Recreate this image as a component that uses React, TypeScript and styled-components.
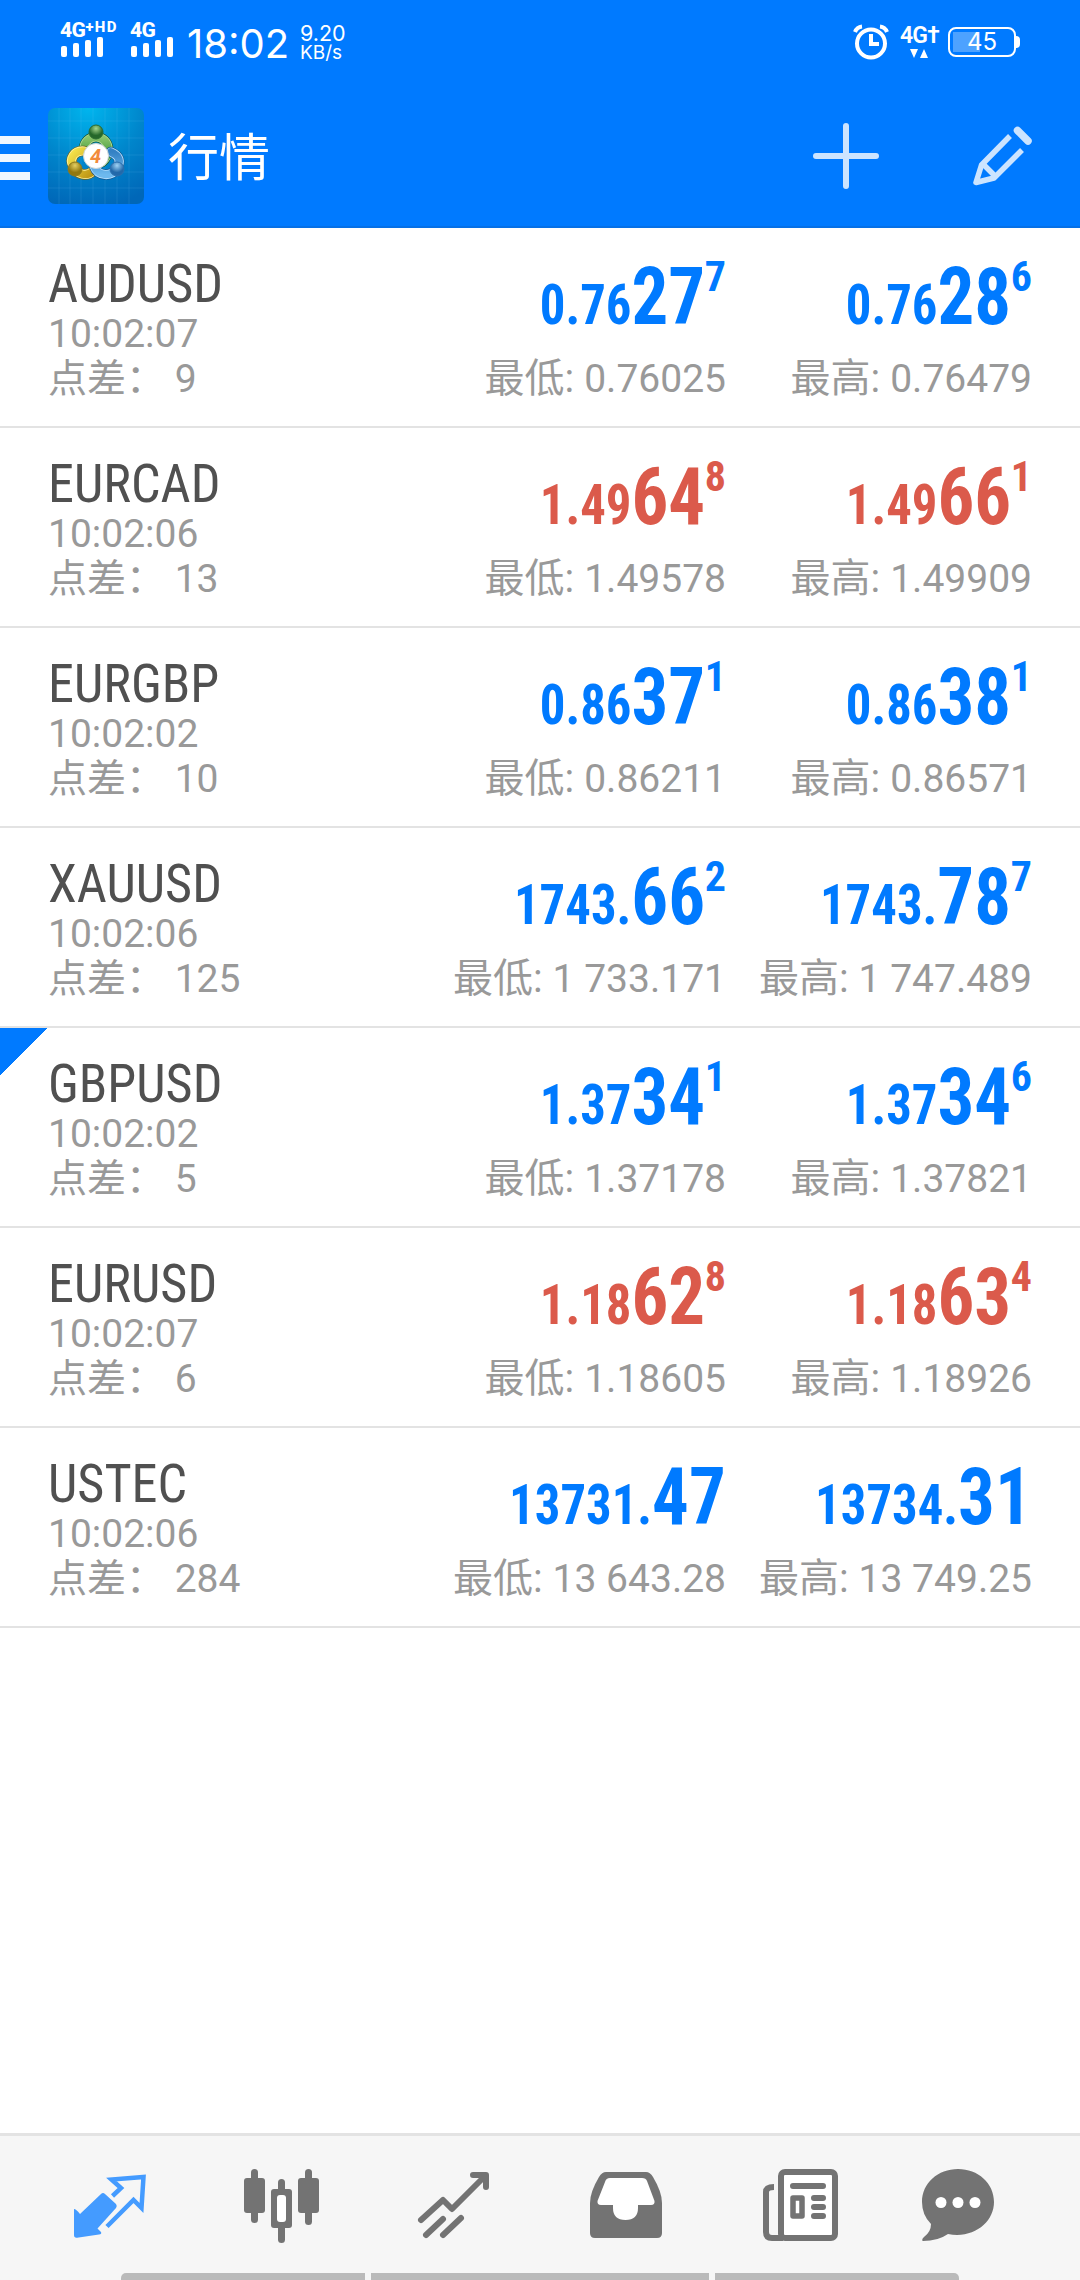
import React from 'react';
import styled, { createGlobalStyle } from 'styled-components';

const BLUE = '#007aff';
const RED = '#db5a4b';

const GlobalStyle = createGlobalStyle`
  *, *::before, *::after { box-sizing: border-box; }
  body { margin: 0; background: #fff; font-family: Roboto, "Noto Sans CJK SC", sans-serif; }
`;

const Screen = styled.main`
  width: 1080px;
  height: 2280px;
  display: flex;
  flex-direction: column;
  overflow: hidden;
  background: #fff;
`;

const TopArea = styled.header`
  height: 228px;
  flex: none;
  color: #fff;
  background: ${BLUE};
  border-bottom: 2px solid #0670e6;
`;

const StatusBar = styled.div`
  height: 84px;
  display: flex;
  align-items: flex-start;
  padding: 0 60px;
  font-family: Inter, sans-serif;
`;

const Signal = styled.div<{ $width: number }>`
  width: ${(p) => p.$width}px;
  padding-top: 21px;
  display: flex;
  flex-direction: column;
`;

const SignalLabel = styled.span`
  height: 16px;
  display: flex;
  font-family: Roboto, sans-serif;
  font-size: 21px;
  font-weight: 800;
  line-height: 18px;
  letter-spacing: -0.5px;
  white-space: nowrap;
`;

const SignalSuffix = styled.span`
  font-size: 15px;
  line-height: 12px;
  letter-spacing: 1.3px;
`;

const SignalBars = styled.div`
  height: 20px;
  display: flex;
  align-items: flex-end;
  gap: 6px;
  padding-left: 1px;
`;

const SignalBar = styled.i<{ $height: number }>`
  width: 6px;
  height: ${(p) => p.$height}px;
  border-radius: 2px;
  background: #fff;
`;

const Clock = styled.span`
  width: 113px;
  padding-top: 20px;
  font-size: 40px;
  line-height: 48px;
`;

const NetSpeed = styled.div`
  padding-top: 23px;
  font-size: 21.5px;
  line-height: 20px;
`;

const SpeedUnit = styled.div`
  font-size: 19px;
`;

const StatusRight = styled.div`
  margin-left: auto;
  padding-top: 24px;
  display: flex;
  align-items: flex-start;
`;

const DataType = styled.div`
  width: 48px;
  margin-left: 11px;
  display: flex;
  flex-direction: column;
  font: 600 23px/24px Roboto, sans-serif;
  letter-spacing: -0.8px;
`;

const DataArrows = styled.svg`
  margin: 1px 0 0 10px;
`;

const Battery = styled.div`
  width: 68px;
  height: 30px;
  margin-top: 3px;
  border: 2px solid #fff;
  border-radius: 8px;
  text-align: center;
  font-size: 24px;
  line-height: 26px;
  background: linear-gradient(#4da2ff, #4da2ff) 3px 3px / 27px 20px no-repeat;
`;

const BatteryCap = styled.i`
  width: 4px;
  height: 12px;
  margin-top: 12px;
  border-radius: 0 4px 4px 0;
  background: #fff;
`;

const AppBar = styled.div`
  height: 144px;
  display: flex;
  align-items: center;
`;

const MenuButton = styled.div`
  width: 48px;
  display: flex;
  flex-direction: column;
  gap: 10px;
  padding-top: 4px;
`;

const MenuLine = styled.i`
  width: 30px;
  height: 8px;
  background: #f0f7ff;
`;

const Title = styled.h1`
  margin: 0 0 5px 24px;
  flex: 1;
  font: 400 51px/60px "Noto Sans CJK SC", sans-serif;
`;

const AppActions = styled.div`
  display: flex;
  gap: 93px;
  padding-right: 48px;
`;

const QuoteList = styled.section`
  flex: 1;
`;

const QuoteRow = styled.article<{ $marked?: boolean }>`
  height: 200px;
  display: grid;
  grid-template-columns: 372px 306px 306px;
  padding: 0 48px;
  border-bottom: 2px solid #e3e3e3;
  background: ${(p) =>
    p.$marked ? `linear-gradient(135deg, ${BLUE} 50%, transparent 50%) 0 0 / 48px 48px no-repeat` : 'none'};
`;

const Instrument = styled.div`
  padding-top: 33px;
  color: #999;
  font-size: 39px;
  line-height: 45px;
  white-space: pre;
`;

const SymbolName = styled.h2`
  margin: 0 0 6px;
  color: #505050;
  font: 400 54px/45px "Roboto Condensed", Roboto, sans-serif;
  transform: scaleX(0.967);
  transform-origin: left;
`;

const PriceColumn = styled.div`
  padding-top: 29px;
  text-align: right;
  white-space: nowrap;
`;

const Price = styled.div<{ $down?: boolean }>`
  height: 80px;
  color: ${(p) => (p.$down ? RED : BLUE)};
  font: 700 79px/80px "Roboto Condensed", Roboto, sans-serif;
`;

const PriceBody = styled.span`
  display: inline-block;
  transform: scaleX(0.923);
  transform-origin: right;
`;

const PriceHead = styled.span`
  font-size: 55px;
  line-height: 0;
`;

const PriceTail = styled.span`
  font-size: 42px;
  line-height: 0;
  vertical-align: 33px;
`;

const Extreme = styled.div`
  margin-top: 20px;
  color: #999;
  font-size: 39px;
  line-height: 45px;
`;

const ExtremeLabel = styled.span`
  font-size: 40px;
  line-height: 0;
`;

const TabBar = styled.nav`
  height: 147px;
  flex: none;
  display: flex;
  flex-direction: column;
  border-top: 3px solid #e3e3e3;
  background: #f6f6f6;
`;

const Tabs = styled.div`
  height: 137px;
  display: grid;
  grid-template-columns: 171px 171px 175px 169px 178px 141px;
  padding: 0 25px;
`;

const Tab = styled.button`
  display: flex;
  justify-content: center;
  padding: 33px 0 0;
  border: 0;
  background: none;
`;

const GestureArea = styled.div`
  height: 7px;
  display: grid;
  grid-template-columns: 244px 338px 244px;
  gap: 6px;
  padding-left: 121px;
`;

const GestureBar = styled.i<{ $radius: string }>`
  background: #bababa;
  border-radius: ${(p) => p.$radius};
`;

type Quote = {
  name: string;
  time: string;
  spread: string;
  bid: [string, string, string];
  ask: [string, string, string];
  low: string;
  high: string;
  down?: boolean;
  marked?: boolean;
};

const quotes: Quote[] = [
  { name: 'AUDUSD', time: '10:02:07', spread: '9', bid: ['0.76', '27', '7'], ask: ['0.76', '28', '6'], low: '0.76025', high: '0.76479' },
  { name: 'EURCAD', time: '10:02:06', spread: '13', bid: ['1.49', '64', '8'], ask: ['1.49', '66', '1'], low: '1.49578', high: '1.49909', down: true },
  { name: 'EURGBP', time: '10:02:02', spread: '10', bid: ['0.86', '37', '1'], ask: ['0.86', '38', '1'], low: '0.86211', high: '0.86571' },
  { name: 'XAUUSD', time: '10:02:06', spread: '125', bid: ['1743.', '66', '2'], ask: ['1743.', '78', '7'], low: '1 733.171', high: '1 747.489' },
  { name: 'GBPUSD', time: '10:02:02', spread: '5', bid: ['1.37', '34', '1'], ask: ['1.37', '34', '6'], low: '1.37178', high: '1.37821', marked: true },
  { name: 'EURUSD', time: '10:02:07', spread: '6', bid: ['1.18', '62', '8'], ask: ['1.18', '63', '4'], low: '1.18605', high: '1.18926', down: true },
  { name: 'USTEC', time: '10:02:06', spread: '284', bid: ['13731.', '47', ''], ask: ['13734.', '31', ''], low: '13 643.28', high: '13 749.25' },
];

function PriceCell({ parts, down, label, value }: { parts: [string, string, string]; down?: boolean; label: string; value: string }) {
  const [head, main, tail] = parts;
  return (
    <PriceColumn>
      <Price $down={down}>
        <PriceBody><PriceHead>{head}</PriceHead>{main}</PriceBody>
        {tail && <PriceTail>{tail}</PriceTail>}
      </Price>
      <Extreme><ExtremeLabel>{label}: </ExtremeLabel>{value}</Extreme>
    </PriceColumn>
  );
}

function SignalMeter({ width, suffix }: { width: number; suffix?: string }) {
  return (
    <Signal $width={width}>
      <SignalLabel>4G{suffix && <SignalSuffix>{suffix}</SignalSuffix>}</SignalLabel>
      <SignalBars>
        {[11, 14, 17, 20].map((h) => <SignalBar key={h} $height={h} />)}
      </SignalBars>
    </Signal>
  );
}

function AlarmIcon() {
  return (
    <svg width="36" height="36" viewBox="0 0 36 36" fill="none" stroke="#fff">
      <circle cx="18" cy="19.5" r="14" strokeWidth="4" />
      <path d="M18 10v10h8" strokeWidth="4" />
      <path d="M2 8Q4 3 9 2.500M34 8Q32 3 27 2.500" strokeWidth="4" />
    </svg>
  );
}

function AppLogo() {
  return (
    <svg width="96" height="96" viewBox="0 0 96 96">
      <defs>
        <radialGradient id="sky" cx=".42" cy="0" r="1.05">
          <stop offset="0" stopColor="#00b5ee" />
          <stop offset=".55" stopColor="#0085cb" />
          <stop offset="1" stopColor="#0067b8" />
        </radialGradient>
        <linearGradient id="green" x2="0" y2="1"><stop stopColor="#8bc56b" /><stop offset="1" stopColor="#278a2c" /></linearGradient>
        <linearGradient id="gold" x2="1" y2="1"><stop stopColor="#f6e34b" /><stop offset="1" stopColor="#bd9413" /></linearGradient>
        <linearGradient id="azure" x2="0" y2="1"><stop stopColor="#3481c4" /><stop offset="1" stopColor="#6db9ee" /></linearGradient>
        <radialGradient id="greenBall" cy=".25"><stop stopColor="#a6d68c" /><stop offset="1" stopColor="#25682a" /></radialGradient>
        <radialGradient id="goldBall" cy=".25"><stop stopColor="#e5cf62" /><stop offset="1" stopColor="#91780e" /></radialGradient>
        <radialGradient id="azureBall" cy=".25"><stop stopColor="#a0d2f4" /><stop offset="1" stopColor="#2269aa" /></radialGradient>
      </defs>
      <rect width="96" height="96" rx="7" fill="url(#sky)" />
      <path d="M11 0v96M22 0v96M33 0v96M45 0v96M57 0v96M69 0v96M81 0v96M0 13h96M0 30h96M0 47h96M0 64h96M0 80h96" stroke="#79d4ff" strokeOpacity=".13" />
      <g fill="none" strokeLinecap="round">
        <path d="M36 41A12 12 0 1 1 60 41Q60 49 54 54" stroke="#17572c" strokeWidth="10.500" />
        <path d="M36 41A12 12 0 1 1 60 41Q60 49 54 54" stroke="#b5dd9f" strokeWidth="9.200" />
        <path d="M36 41A12 12 0 1 1 60 41Q60 49 54 54" stroke="url(#green)" strokeWidth="7.500" />
        <path d="M36 43C26 42 21 51 25 58C29 67 39 69 45 63" stroke="#6d651c" strokeWidth="10.500" />
        <path d="M36 43C26 42 21 51 25 58C29 67 39 69 45 63" stroke="#fff2a2" strokeWidth="9.200" />
        <path d="M36 43C26 42 21 51 25 58C29 67 39 69 45 63" stroke="url(#gold)" strokeWidth="7.500" />
        <path d="M63 44C72 48 73 54 69 60C64 69 50 69 46 58" stroke="#14568f" strokeWidth="10.500" />
        <path d="M63 44C72 48 73 54 69 60C64 69 50 69 46 58" stroke="#b6e1ff" strokeWidth="9.200" />
        <path d="M63 44C72 48 73 54 69 60C64 69 50 69 46 58" stroke="url(#azure)" strokeWidth="7.500" />
      </g>
      <circle cx="48" cy="24" r="7" fill="url(#greenBall)" stroke="#2c6d32" />
      <circle cx="27" cy="61" r="7" fill="url(#goldBall)" stroke="#8d7a1e" />
      <circle cx="69" cy="61" r="7" fill="url(#azureBall)" stroke="#2c6fae" />
      <circle cx="48" cy="48" r="12.500" fill="#fff" stroke="#ccd5d5" />
      <text x="47.500" y="55" textAnchor="middle" fontFamily="Roboto, sans-serif" fontStyle="italic" fontWeight="700" fontSize="20" fill="#f28b3b">4</text>
    </svg>
  );
}

function PlusIcon() {
  return (
    <svg width="66" height="66" viewBox="0 0 66 66" stroke="#cce4ff" strokeWidth="6" strokeLinecap="round">
      <path d="M3 33h60M33 3v60" />
    </svg>
  );
}

function PencilIcon() {
  return (
    <svg width="60" height="66" viewBox="0 0 60 66" fill="none" stroke="#cce4ff" strokeWidth="5.500">
      <path d="M38 13 9.500 42 4 59.500 22 55 50 27" strokeLinejoin="round" />
      <path d="M11 41 23 53" />
      <path d="M45.500 7.500 56 18" strokeWidth="7.500" strokeLinecap="round" />
    </svg>
  );
}

function QuotesIcon() {
  return (
    <svg width="75" height="75" viewBox="0 0 75 75" fill="none">
      <path d="M1 40Q3 40 7 45L28 25Q30 23 32 25L43 35Q44.500 37 43 39L24.500 59.500 28 63Q29 65 26 65.500L4 68.700Q1 69 1 66Z" fill="#449bff" />
      <path d="M39.500 27 48 19 38.500 10.500 70.500 8 68.500 39 60.500 31 34 57.500" stroke="#449bff" strokeWidth="4.500" />
    </svg>
  );
}

function ChartIcon() {
  return (
    <svg width="75" height="75" viewBox="0 0 75 75" fill="#737373">
      <rect x="7" width="7" height="54" rx="3.500" />
      <rect y="9" width="21" height="35" rx="3" />
      <rect x="34" y="10" width="7" height="64" rx="3.500" />
      <rect x="27" y="20" width="21" height="39" rx="3" />
      <rect x="33" y="26" width="9" height="27" rx="3" fill="#fff" />
      <rect x="61" width="7" height="56" rx="3.500" />
      <rect x="54" y="9" width="21" height="35" rx="3" />
    </svg>
  );
}

function TradeIcon() {
  return (
    <svg width="75" height="75" viewBox="0 0 75 75" fill="none" stroke="#737373" strokeWidth="6" strokeLinecap="round" strokeLinejoin="round">
      <path d="M4 51 26 31 35 40 68 7M56 6h13v12" />
      <path d="M9 66 26 50M26 66 44 49" />
    </svg>
  );
}

function HistoryIcon() {
  return (
    <svg width="75" height="75" viewBox="0 0 75 75">
      <path fill="#737373" d="M17 3H57Q61 3 64 8Q73 23 73 34V64Q73 69 68 69H6Q1 69 1 64V34Q1 23 10 8Q13 3 17 3Z" />
      <path fill="#fff" d="M21 9H53Q57 9 58 12L65.500 32Q66 36 62 36H49V39Q49 51 36.500 51Q24 51 24 39V36H12Q8 36 8.500 32L16 13Q17 9 21 9Z" />
    </svg>
  );
}

function NewsIcon() {
  return (
    <svg width="75" height="75" viewBox="0 0 75 75" fill="none" stroke="#737373" strokeWidth="6" strokeLinejoin="round">
      <path d="M11 18Q3 18 3 23V63Q3 69 9 69H20" />
      <rect x="18" y="3" width="54" height="66" rx="4" fill="#fff" />
      <rect x="30" y="29" width="9" height="18" strokeWidth="5.500" />
      <path d="M30 17H60M51 29H60M51 38H60M51 47H60" strokeLinecap="round" />
    </svg>
  );
}

function ChatIcon() {
  return (
    <svg width="75" height="75" viewBox="0 0 75 75">
      <path fill="#737373" d="M36 0C56 0 72 14 72 33C72 53 52 70 26 65Q16 72 1 72Q-1 71 2 68Q9 63 9 55Q0 46 0 33C0 14 16 0 36 0Z" />
      <g fill="#fff"><circle cx="19" cy="33.500" r="5.500" /><circle cx="36" cy="33.500" r="5.500" /><circle cx="53" cy="33.500" r="5.500" /></g>
    </svg>
  );
}

const tabIcons = [QuotesIcon, ChartIcon, TradeIcon, HistoryIcon, NewsIcon, ChatIcon];

export default function App() {
  return (
    <Screen>
      <GlobalStyle />
      <TopArea>
        <StatusBar>
          <SignalMeter width={70} suffix="+HD" />
          <SignalMeter width={57} />
          <Clock>18:02</Clock>
          <NetSpeed>9.20<SpeedUnit>KB/s</SpeedUnit></NetSpeed>
          <StatusRight>
            <AlarmIcon />
            <DataType>
              4G†
              <DataArrows width="18" height="9" viewBox="0 0 18 9" fill="#fff"><path d="M0 0h8L4 9ZM10 9h8L14 0Z" /></DataArrows>
            </DataType>
            <Battery>45</Battery>
            <BatteryCap />
          </StatusRight>
        </StatusBar>
        <AppBar>
          <MenuButton><MenuLine /><MenuLine /><MenuLine /></MenuButton>
          <AppLogo />
          <Title>行情</Title>
          <AppActions><PlusIcon /><PencilIcon /></AppActions>
        </AppBar>
      </TopArea>
      <QuoteList>
        {quotes.map((q) => (
          <QuoteRow key={q.name} $marked={q.marked}>
            <Instrument>
              <SymbolName>{q.name}</SymbolName>
              <div>{q.time}</div>
              <div>点差： {q.spread}</div>
            </Instrument>
            <PriceCell parts={q.bid} down={q.down} label="最低" value={q.low} />
            <PriceCell parts={q.ask} down={q.down} label="最高" value={q.high} />
          </QuoteRow>
        ))}
      </QuoteList>
      <TabBar>
        <Tabs>
          {tabIcons.map((Icon, i) => <Tab key={i}><Icon /></Tab>)}
        </Tabs>
        <GestureArea>
          <GestureBar $radius="5px 0 0 0" />
          <GestureBar $radius="0" />
          <GestureBar $radius="0 5px 0 0" />
        </GestureArea>
      </TabBar>
    </Screen>
  );
}
